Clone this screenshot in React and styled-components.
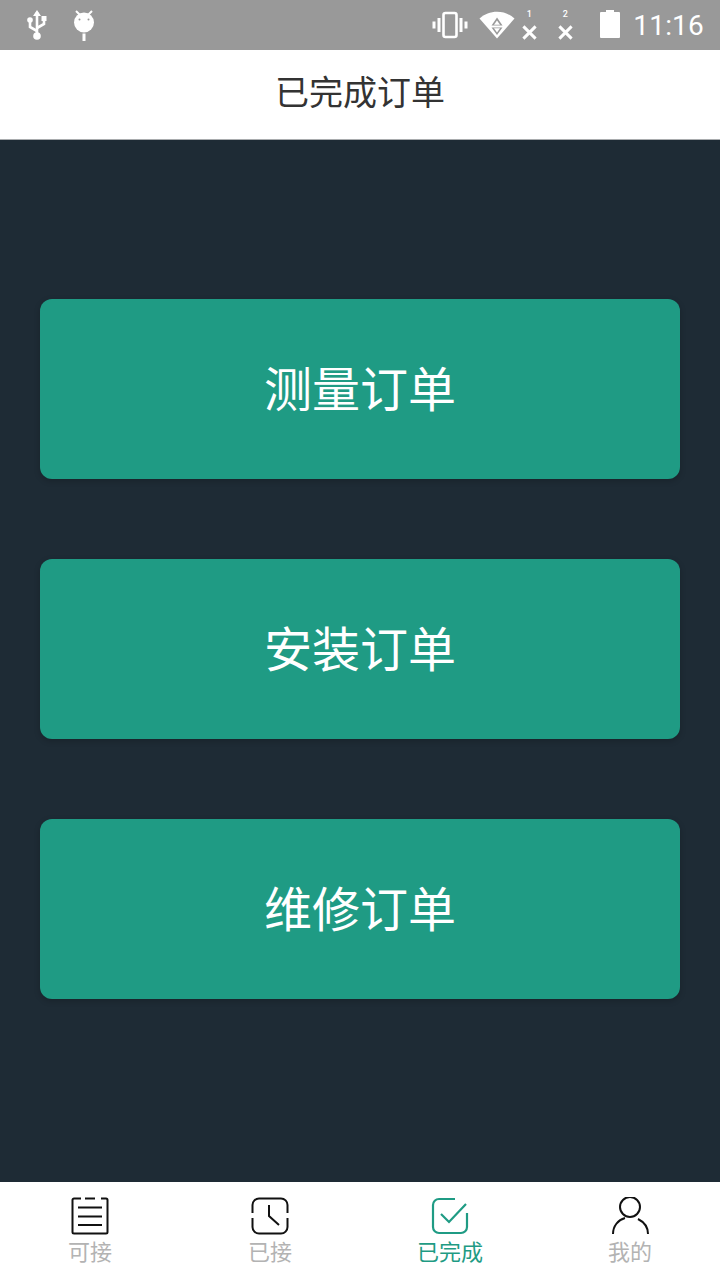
import React from "react";
import styled, { createGlobalStyle } from "styled-components";

const orders = ["测量订单", "安装订单", "维修订单"];

const UsbIcon = () => (
  <svg width="26" height="32" viewBox="0 0 26 32" fill="none">
    <path d="M13 3v24" stroke="#fff" strokeWidth="2.600" />
    <path d="M13 1l4 6H9z" fill="#fff" />
    <path d="M13 22l-7-4v-6M13 19l7-4v-5" stroke="#fff" strokeWidth="2.600" />
    <circle cx="6" cy="11" r="2.800" fill="#fff" />
    <rect x="17.500" y="7" width="5" height="5" fill="#fff" />
    <circle cx="13" cy="27" r="3.800" fill="#fff" />
  </svg>
);

const DebugIcon = () => (
  <svg width="24" height="32" viewBox="0 0 24 32" fill="none">
    <path d="M4 2l4 4M20 2l-4 4" stroke="#fff" strokeWidth="2" />
    <circle cx="12" cy="13.500" r="10" fill="#fff" />
    <circle cx="7.500" cy="10.500" r="1" fill="#999" />
    <circle cx="16.500" cy="10.500" r="1" fill="#999" />
    <rect x="10.500" y="24.500" width="3" height="7.500" fill="#fff" />
  </svg>
);

const VibrateIcon = () => (
  <svg width="36" height="28" viewBox="0 0 36 28" fill="none">
    <rect x="11.500" y="2" width="13" height="24" rx="2" stroke="#fff" strokeWidth="2.600" />
    <path d="M7 7v14M2 10.500v7M29 7v14M34 10.500v7" stroke="#fff" strokeWidth="3" />
  </svg>
);

const WifiIcon = () => (
  <svg width="36" height="28" viewBox="0 0 36 28">
    <path d="M0.500 7.500C10 -1.500 26 -1.500 35.500 7.500L18 27.500z" fill="#fff" />
    <path d="M18 6.500l5.500 8h-11z" fill="#999" />
    <path d="M18 9.500l3 4.200h-6z" fill="#fff" />
    <path d="M12.500 16.500h11L18 24z" fill="#999" />
    <path d="M15 17.300h6L18 21.500z" fill="#fff" />
  </svg>
);

const SimIcon = ({ slot, left }) => (
  <SimBox $left={left}>
    <SimNumber>{slot}</SimNumber>
    <svg width="15" height="15" viewBox="0 0 16 16">
      <path d="M1.500 1.500l13 13M14.500 1.500l-13 13" stroke="#fff" strokeWidth="3.200" />
    </svg>
  </SimBox>
);

const BatteryIcon = () => (
  <svg width="20" height="28" viewBox="0 0 20 28">
    <path d="M6 0h8v2h5a1 1 0 0 1 1 1v24a1 1 0 0 1-1 1H1a1 1 0 0 1-1-1V3a1 1 0 0 1 1-1h5z" fill="#fff" />
  </svg>
);

const ListIcon = () => (
  <svg width="38" height="38" viewBox="0 0 38 38" fill="none" stroke="#111" strokeWidth="2">
    <path d="M10 1.500H3A1.500 1.500 0 0 0 1.500 3v32A1.500 1.500 0 0 0 3 36.500h32a1.500 1.500 0 0 0 1.500-1.500V3A1.500 1.500 0 0 0 35 1.500h-5" />
    <path d="M14 1.500h10" />
    <path d="M7 10.500h24M7 19.500h24M7 28h24" strokeWidth="1.800" />
  </svg>
);

const ClockIcon = () => (
  <svg width="38" height="38" viewBox="0 0 38 38" fill="none" stroke="#111" strokeWidth="2">
    <path d="M1.500 16V8a6.500 6.500 0 0 1 6.500-6.500h22A6.500 6.500 0 0 1 36.500 8v8M1.500 21v9A6.500 6.500 0 0 0 8 36.500h22a6.500 6.500 0 0 0 6.500-6.500v-9" />
    <path d="M18 8v11l10 9" />
  </svg>
);

const CheckIcon = () => (
  <svg width="38" height="38" viewBox="0 0 38 38" fill="none" stroke="#1f9b84" strokeWidth="2.200">
    <path d="M24 2H8a6 6 0 0 0-6 6v22a6 6 0 0 0 6 6h22a6 6 0 0 0 6-6V16" />
    <path d="M10 17l8 8L35 7" />
  </svg>
);

const UserIcon = () => (
  <svg width="38" height="38" viewBox="0 0 38 38" fill="none" stroke="#111" strokeWidth="2">
    <circle cx="19" cy="10" r="10" />
    <path d="M2 37c0-8 5-14 12-16M37 37c0-7-4-12-10-15" />
  </svg>
);

const tabs = [
  { label: "可接", icon: <ListIcon /> },
  { label: "已接", icon: <ClockIcon /> },
  { label: "已完成", icon: <CheckIcon />, active: true },
  { label: "我的", icon: <UserIcon /> },
];

function App() {
  return (
    <>
      <GlobalStyle />
      <Page>
        <StatusBar>
          <StatusGroup>
            <UsbIcon />
            <DebugIcon />
          </StatusGroup>
          <StatusGroupRight>
            <StatusSlot $left={0}>
              <VibrateIcon />
            </StatusSlot>
            <StatusSlot $left={11}>
              <WifiIcon />
            </StatusSlot>
            <SimIcon slot="1" left={6} />
            <SimIcon slot="2" left={20} />
            <BatterySlot>
              <BatteryIcon />
            </BatterySlot>
            <Clock>11:16</Clock>
          </StatusGroupRight>
        </StatusBar>
        <Header>已完成订单</Header>
        <Content>
          {orders.map((name) => (
            <OrderButton key={name}>{name}</OrderButton>
          ))}
        </Content>
        <TabBar>
          {tabs.map((tab) => (
            <Tab key={tab.label}>
              {tab.icon}
              <TabLabel $active={tab.active}>{tab.label}</TabLabel>
            </Tab>
          ))}
        </TabBar>
      </Page>
    </>
  );
}

const GlobalStyle = createGlobalStyle`
  html, body {
    margin: 0;
    padding: 0;
  }

  body {
    font-family: "Roboto", "Noto Sans CJK SC", sans-serif;
  }
`;

const Page = styled.div`
  width: 720px;
  height: 1280px;
  display: flex;
  flex-direction: column;
  overflow: hidden;
  background: #1e2b35;
`;

const StatusBar = styled.div`
  height: 50px;
  flex: none;
  display: flex;
  align-items: center;
  justify-content: space-between;
  padding: 0 16px 0 24px;
  background: #999;
`;

const StatusGroup = styled.div`
  display: flex;
  align-items: center;
  gap: 22px;
`;

const StatusGroupRight = styled.div`
  display: flex;
  align-items: center;
`;

const StatusSlot = styled.div`
  display: flex;
  margin-left: ${(props) => props.$left}px;
`;

const SimBox = styled.div`
  width: 16px;
  height: 30px;
  display: flex;
  flex-direction: column;
  align-items: center;
  justify-content: space-between;
  margin-left: ${(props) => props.$left}px;
  padding-bottom: 1px;
`;

const SimNumber = styled.span`
  font-size: 9px;
  font-weight: 500;
  line-height: 8px;
  color: #fff;
`;

const BatterySlot = styled.div`
  display: flex;
  margin: 0 13px 2px 27px;
`;

const Clock = styled.span`
  font-size: 28px;
  line-height: 34px;
  margin-top: 2px;
  letter-spacing: 0.2px;
  color: #fff;
`;

const Header = styled.div`
  height: 81px;
  flex: none;
  display: flex;
  align-items: center;
  justify-content: center;
  padding-bottom: 8px;
  background: #fff;
  border-bottom: 1px solid #a9acae;
  font-size: 34px;
  color: #333;
`;

const Content = styled.div`
  flex: 1;
  display: flex;
  flex-direction: column;
  gap: 80px;
  padding: 159px 40px 0;
`;

const OrderButton = styled.div`
  height: 174px;
  display: flex;
  align-items: center;
  justify-content: center;
  padding-bottom: 6px;
  border-radius: 12px;
  background: #1f9b84;
  box-shadow: 0 2px 6px rgba(0, 0, 0, 0.2);
  font-size: 48px;
  color: #fff;
`;

const TabBar = styled.div`
  height: 98px;
  flex: none;
  display: grid;
  grid-template-columns: repeat(4, 1fr);
  background: #fff;
`;

const Tab = styled.div`
  display: flex;
  flex-direction: column;
  align-items: center;
  padding-top: 15px;
`;

const TabLabel = styled.span`
  margin-top: 5px;
  font-size: 22px;
  line-height: 26px;
  color: ${(props) => (props.$active ? "#1f9b84" : "#b3b3b3")};
`;

export default App;
